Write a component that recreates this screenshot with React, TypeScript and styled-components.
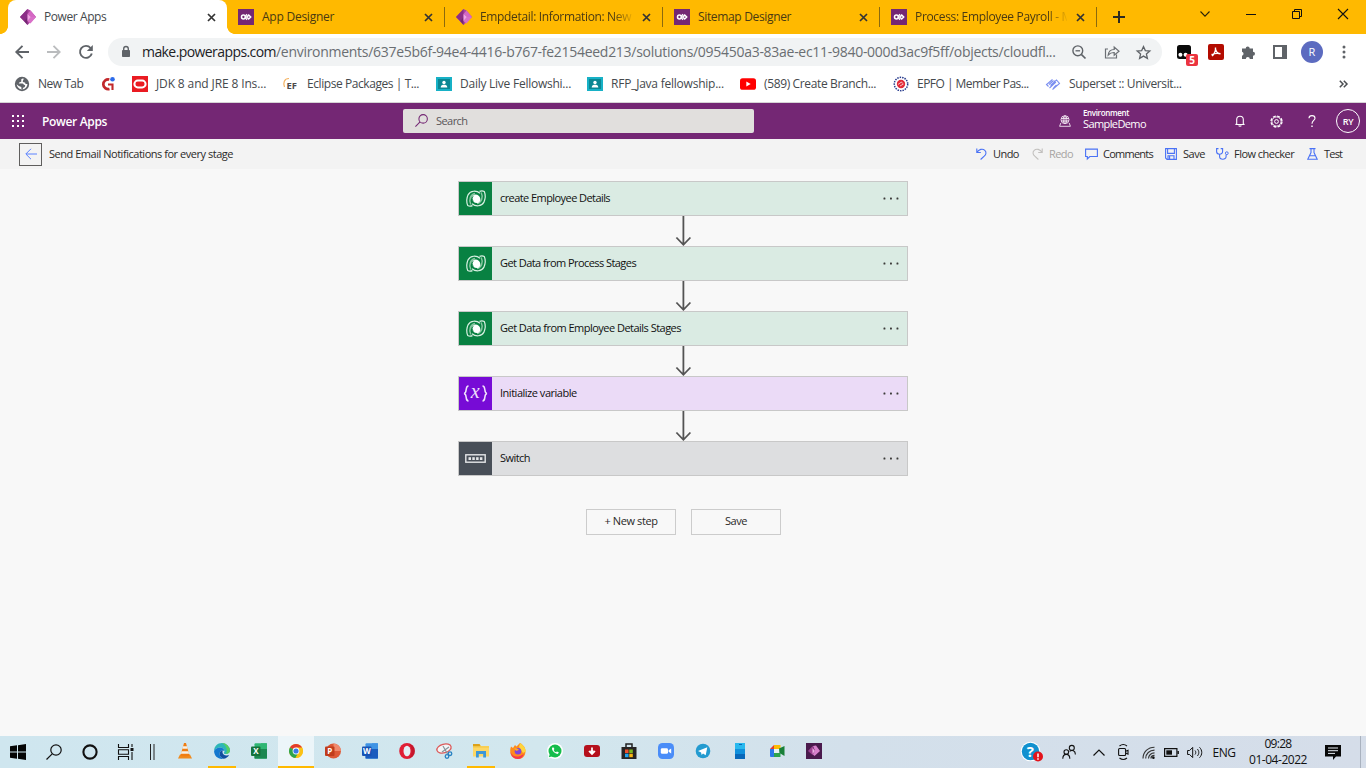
import React from 'react';
import styled, { createGlobalStyle } from 'styled-components';

const GlobalStyle = createGlobalStyle`
  * { box-sizing: border-box; }
  body { margin: 0; overflow: hidden; background: #f8f8f8; font-family: "Open Sans", "Noto Sans", sans-serif; }
  svg { display: block; flex: none; overflow: visible; }
`;

const Screen = styled.div`
  width: 1366px;
  height: 768px;
  display: flex;
  flex-direction: column;
`;

const Label = styled.span<{ $track?: number; $size?: number }>`
  font-size: ${p => p.$size ?? 12}px;
  letter-spacing: ${p => p.$track ?? 0}px;
  white-space: pre;
`;

/* ---------- browser tabs ---------- */

const TabStrip = styled.div`
  height: 34px;
  flex: none;
  display: flex;
  padding-left: 8px;
  background: #ffb900;
`;

const Tab = styled.div<{ $active?: boolean; $width: number }>`
  position: relative;
  width: ${p => p.$width}px;
  display: flex;
  align-items: center;
  padding: 0 11px;
  padding-left: ${p => (p.$active ? 12 : 11)}px;
  color: ${p => (p.$active ? '#45494d' : '#4a3a12')};
  background: ${p => (p.$active ? '#fff' : 'transparent')};
  border-radius: ${p => (p.$active ? '8px 8px 0 0' : '0')};
  &::before, &::after {
    content: '';
    display: ${p => (p.$active ? 'block' : 'none')};
    position: absolute;
    bottom: 0;
    width: 8px;
    height: 8px;
  }
  &::before { left: -8px; background: radial-gradient(circle at 0 0, transparent 7.6px, #fff 8.2px); }
  &::after { right: -8px; background: radial-gradient(circle at 100% 0, transparent 7.6px, #fff 8.2px); }
`;

const TabTitle = styled.div<{ $fade?: boolean }>`
  flex: 1;
  min-width: 0;
  margin: 0 9px 0 8px;
  overflow: hidden;
  line-height: 16px;
  display: flex;
  -webkit-mask-image: ${p => (p.$fade ? 'linear-gradient(90deg, #000 87%, transparent 101%)' : 'none')};
`;

const TabDivider = styled.i`
  width: 1px;
  height: 20px;
  margin-top: 7px;
  background: #8b6a0e;
`;

const NewTab = styled.div`
  width: 44px;
  display: grid;
  place-items: center;
`;

const WindowControls = styled.div`
  margin-left: auto;
  height: 28px;
  display: grid;
  grid-template-columns: repeat(4, 46px);
  place-items: center;
`;

/* ---------- address bar ---------- */

const AddressRow = styled.div`
  height: 36px;
  flex: none;
  display: flex;
  align-items: center;
  background: #fff;
`;

const NavButtons = styled.div`
  width: 108px;
  padding-left: 6px;
  display: grid;
  grid-template-columns: repeat(3, 32px);
  place-items: center;
`;

const Omnibox = styled.div`
  width: 1054px;
  height: 28px;
  border-radius: 14px;
  background: #f1f3f4;
  display: flex;
  align-items: center;
  padding-left: 12px;
  color: #6a6e72;
  line-height: 20px;
`;

const Url = styled.div`
  width: 931px;
  flex: none;
  padding: 0 0 2px 10px;
  display: flex;
  align-items: baseline;
  b { font-weight: 400; color: #202124; }
`;

const OmniActions = styled.div`
  display: grid;
  grid-template-columns: 32px 33px 31px;
  place-items: center;
`;

const Extensions = styled.div`
  display: grid;
  padding-left: 6px;
  grid-template-columns: 32px 32px 32px 32px 32px 32px;
  place-items: center;
`;

const ExtensionWithBadge = styled.div`
  position: relative;
`;

const Badge = styled.span`
  position: absolute;
  left: 9px;
  top: 9px;
  width: 12px;
  height: 12px;
  border-radius: 2px;
  background: #eb3440;
  color: #fff;
  font: 700 10px/12px "Open Sans", sans-serif;
  text-align: center;
`;

const Profile = styled.div`
  width: 22px;
  height: 22px;
  border-radius: 50%;
  background: #5c6bc0;
  color: #fff;
  font-size: 11px;
  line-height: 22px;
  text-align: center;
`;

/* ---------- bookmarks ---------- */

const BookmarkBar = styled.div`
  height: 33px;
  flex: none;
  display: flex;
  align-items: center;
  padding: 0 18px 4px 14px;
  background: #fff;
  border-bottom: 1px solid #d6d3d6;
`;

const Bookmark = styled.div<{ $width: number }>`
  width: ${p => p.$width}px;
  display: flex;
  align-items: center;
  gap: 8px;
  color: #45494d;
  line-height: 16px;
`;

const BookmarkMore = styled.div`
  margin-left: auto;
`;

/* ---------- app header ---------- */

const Header = styled.header`
  height: 36px;
  flex: none;
  display: flex;
  align-items: center;
  padding-left: 12px;
  color: #fff;
  background: #742774;
`;

const Brand = styled.div`
  width: 379px;
  flex: none;
  display: flex;
  padding: 1px 0 0 18px;
  font-weight: 600;
  line-height: 16px;
`;

const SearchBox = styled.div`
  width: 351px;
  flex: none;
  height: 24px;
  border-radius: 2px;
  background: #e1dfdd;
  color: #5a5659;
  display: flex;
  align-items: center;
  gap: 8px;
  padding: 0 0 1px 12px;
`;

const Environment = styled.div`
  margin-left: 305px;
  width: 163px;
  flex: none;
  display: flex;
  align-items: center;
  gap: 12px;
`;

const EnvironmentText = styled.div`
  display: flex;
  flex-direction: column;
  line-height: 12px;
  padding-bottom: 4px;
`;

const EnvironmentCaption = styled(Label)`
  font-weight: 600;
  line-height: 10px;
`;

const HeaderActions = styled.div`
  display: grid;
  grid-template-columns: repeat(4, 36px);
  place-items: center;
`;

const Avatar = styled.div`
  width: 24px;
  height: 24px;
  border: 1px solid #fff;
  border-radius: 50%;
  font-size: 9px;
  font-weight: 600;
  line-height: 24px;
  letter-spacing: -0.3px;
  text-align: center;
`;

/* ---------- command bar ---------- */

const CommandBar = styled.div`
  height: 30px;
  flex: none;
  display: flex;
  align-items: center;
  padding-left: 19px;
  background: #f3f3f3;
  color: #2b2a29;
`;

const BackButton = styled.div`
  width: 23px;
  height: 23px;
  border: 1px solid #5f5e5d;
  display: grid;
  place-items: center;
`;

const FlowName = styled.div`
  width: 934px;
  display: flex;
  padding-left: 7px;
  line-height: 16px;
`;

const Command = styled.div<{ $width: number; $gap: number; $disabled?: boolean }>`
  width: ${p => p.$width}px;
  display: flex;
  align-items: center;
  gap: ${p => p.$gap}px;
  line-height: 16px;
  color: ${p => (p.$disabled ? '#a6a4a2' : '#2b2a29')};
`;

/* ---------- flow canvas ---------- */

const Canvas = styled.main`
  flex: 1;
  display: flex;
  flex-direction: column;
  align-items: center;
  padding-top: 12px;
  background: #f8f8f8;
`;

const Card = styled.div<{ $tint: string }>`
  width: 450px;
  height: 35px;
  border: 1px solid #c8c8c8;
  background: ${p => p.$tint};
  display: flex;
  align-items: center;
`;

const CardIcon = styled.div<{ $color: string }>`
  width: 33px;
  height: 33px;
  background: ${p => p.$color};
  display: grid;
  place-items: center;
`;

const CardTitle = styled.div`
  flex: 1;
  display: flex;
  padding: 0 0 1px 8px;
  line-height: 16px;
  color: #111;
`;

const CardMenu = styled.div`
  padding-right: 8px;
`;

const Connector = styled.div`
  height: 30px;
`;

const ButtonRow = styled.div`
  display: flex;
  gap: 15px;
  padding: 33px 0 0 1px;
`;

const CanvasButton = styled.div`
  width: 90px;
  height: 26px;
  border: 1px solid #ccc;
  color: #2b2a29;
  line-height: 22px;
  display: flex;
  justify-content: center;
`;

/* ---------- taskbar ---------- */

const Taskbar = styled.footer`
  height: 32px;
  flex: none;
  display: flex;
  background: linear-gradient(90deg, #cfe6ef 0%, #d2e7ee 40%, #d3e0eb 62%, #d5dde9 100%);
  color: #111;
`;

const SystemButtons = styled.div`
  width: 167px;
  padding-bottom: 1px;
  display: grid;
  grid-template-columns: repeat(4, 36px) 16px;
  align-items: center;
  justify-items: center;
`;

const TaskApp = styled.div<{ $open?: boolean; $active?: boolean }>`
  width: 36px;
  margin-right: 1px;
  padding-bottom: 2px;
  display: grid;
  place-items: center;
  background:
    ${p => (p.$open ? 'linear-gradient(#ffb900, #ffb900) bottom / ' + (p.$active ? 36 : 28) + 'px 2px no-repeat,' : '')}
    ${p => (p.$active ? '#ecf5f9' : 'transparent')};
`;

const Tray = styled.div`
  margin-left: auto;
  width: 352px;
  display: grid;
  grid-template-columns: 36px 37px 23px 26px 24px 22px 26px 32px 76px 34px 16px;
  align-items: center;
  justify-items: center;
`;

const Clock = styled.div`
  display: flex;
  flex-direction: column;
  align-items: center;
  line-height: 16px;
`;

const ShowDesktop = styled.i`
  width: 1px;
  height: 32px;
  margin-left: 4px;
  background: #a9b2bf;
`;

/* ---------- icons ---------- */

type IconProps = { w?: number; h?: number; box?: string; children: React.ReactNode };
const Icon = ({ w = 16, h = w, box = `0 0 ${w} ${h}`, children }: IconProps) => (
  <svg width={w} height={h} viewBox={box} fill="none">{children}</svg>
);

const PowerAppsIcon = () => (
  <Icon>
    <path d="M7.500 0L0 8l7.500 8L16 8 10.500 1.500z" fill="#a9459f" />
    <path d="M7.500 0v8L4 12 0 8z" fill="#8b2e86" />
    <path d="M4 12l3.500-4v8z" fill="#742774" />
    <path d="M10.500 1.500L16 8l-5 0-3.500-3z" fill="#d568c4" />
    <path d="M11 8h5l-5.500 6.500L7.500 12z" fill="#d970c8" />
    <path d="M7.500 5L11 8l-3.500 4z" fill="#f0a5e4" />
  </Icon>
);

const DynamicsIcon = () => (
  <Icon>
    <path d="M0 0h16v16H0z" fill="#742774" />
    <circle cx="5.400" cy="8" r="1.900" stroke="#fff" strokeWidth="1.500" />
    <path d="M10.700 6l2 2-2 2-2-2z" stroke="#fff" strokeWidth="1.500" />
    <path d="M7.500 7l1.500-1.700M7.500 9l1.500 1.700" stroke="#fff" strokeWidth="1.300" />
  </Icon>
);

const CloseIcon = ({ color = '#333' }: { color?: string }) => (
  <Icon w={9}><path d="M1 1l7 7M8 1L1 8" stroke={color} strokeWidth="1.700" /></Icon>
);

const GlobeIcon = () => (
  <Icon>
    <circle cx="8" cy="8" r="7.200" fill="#5f6368" />
    <path d="M9.500 2.600c-2-.2-2.500 1-2.300 2 .8.600-.2 1.600-1.500 1.600-.8.300-.5 1.300-1.500 1.400h4.300c1 .3 1 1.400 2.200 1.500.9.200.3 1.600-.3 2.200-.9.300-1.700.6-1.700 2.200-1.700-.2-1.400-1.600-1.300-2.600C5.500 10.800 4 9.700 2.700 8.300 3 11 5.300 13.300 8 13.400c3 0 5.400-2.400 5.400-5.400-1.200.4-2.400-.3-2.300-1.500-.8-.2-2-.1-2.400-1 .2-.8.300-1.200.8-1.700z" fill="#fff" />
  </Icon>
);

const CIcon = () => (
  <Icon>
    <path d="M8.300 3.500A4.900 4.900 0 1 0 8.500 13" stroke="#c2282b" strokeWidth="2.700" />
    <path d="M7 8.500h4.500V14" stroke="#c2282b" strokeWidth="2.100" />
    <circle cx="11.500" cy="3.300" r="2.300" fill="#2c6bea" />
  </Icon>
);

const OracleIcon = () => (
  <Icon>
    <path d="M0 0h16v16H0z" fill="#ea1b22" />
    <rect x="2.400" y="4.600" width="11.200" height="6.800" rx="3.400" stroke="#fff" strokeWidth="2" />
  </Icon>
);

const EclipseIcon = () => (
  <Icon>
    <path d="M6 2.500C1 2.500 0 7 1.500 11" stroke="#f4b15e" strokeWidth="1.200" />
    <text x="3.500" y="13" fontSize="9.500" fontWeight="700" fill="#4d4a4a" fontFamily="Open Sans, sans-serif">EF</text>
  </Icon>
);

const ClassroomIcon = () => (
  <Icon>
    <path d="M0 1h16v14H0z" fill="#17b1c6" />
    <path d="M2 3h12v10H2z" fill="#0b8793" />
    <circle cx="8" cy="6.500" r="1.700" fill="#fff" />
    <path d="M4.700 11.500c0-2.400 1.700-2.800 3.300-2.800s3.300.4 3.300 2.800z" fill="#fff" />
  </Icon>
);

const YoutubeIcon = () => (
  <Icon>
    <rect y="2.300" width="16" height="11.500" rx="2.600" fill="#f00" />
    <path d="M6.300 5.600v5L10.700 8z" fill="#fff" />
  </Icon>
);

const EpfoIcon = () => (
  <Icon>
    <circle cx="8" cy="8" r="6.700" stroke="#263a8c" strokeWidth="1.500" strokeDasharray="1.500 1" />
    <circle cx="8" cy="8" r="4.200" fill="#e22a38" />
    <path d="M5 8.500l3.500-2.500 1 1.500M7 10l3.500-2" stroke="#f6c3c7" />
  </Icon>
);

const SupersetIcon = () => (
  <Icon>
    <path d="M3.500 10.500L1.500 8.500 7.500 3.500M4.500 12L10.500 6.500 8.500 4.500M5.500 9.500l6-5.500 3 3.500-7 6M8.500 12l3-3M4 8.500l4-3.500" stroke="#7a8ef0" strokeWidth="1.100" />
  </Icon>
);

const NavBack = ({ color }: { color: string }) => (
  <Icon w={14}><path d="M14 7H1.500M7.500.8L1.300 7l6.200 6.200" stroke={color} strokeWidth="1.900" /></Icon>
);
const NavForward = ({ color }: { color: string }) => (
  <Icon w={14}><path d="M0 7h12.500M6.500.8L12.700 7l-6.200 6.200" stroke={color} strokeWidth="1.800" /></Icon>
);
const Reload = () => (
  <Icon w={14}>
    <path d="M12.800 8.500A6 6 0 1 1 11.600 3" stroke="#5f6368" strokeWidth="1.900" />
    <path d="M13.800 0v6H7.800z" fill="#5f6368" />
  </Icon>
);
const Lock = () => (
  <Icon w={12} h={14}>
    <rect x="2" y="5" width="8" height="7" rx=".8" fill="#5f6368" />
    <path d="M3.700 5.500V3.800a2.300 2.300 0 0 1 4.600 0v1.700" stroke="#5f6368" strokeWidth="1.400" />
  </Icon>
);
const ZoomOut = () => (
  <Icon w={14}>
    <circle cx="5.800" cy="5.800" r="4.900" stroke="#5f6368" strokeWidth="1.400" />
    <path d="M9.300 9.300L13.500 13.500" stroke="#5f6368" strokeWidth="1.700" /><path d="M3.500 5.800h4.600" stroke="#5f6368" strokeWidth="1.300" />
  </Icon>
);
const Share = () => (
  <Icon>
    <path d="M4 5H1.500v9h11v-3.500" stroke="#6b6f74" strokeWidth="1.200" />
    <path d="M4.200 11c.4-4 2.600-5.500 6-5.500V3l4.800 4.200-4.800 4V8.500c-3-.1-4.500.8-6 2.500z" stroke="#6b6f74" strokeWidth="1.200" />
  </Icon>
);
const Star = () => (
  <Icon w={15}><path d="M7.500 1.500l1.800 4.100 4.500.4-3.400 3 1 4.400-3.900-2.300-3.900 2.300 1-4.400L1.200 6l4.500-.4z" stroke="#5f6368" strokeWidth="1.300" /></Icon>
);
const MonkeyIcon = () => (
  <Icon w={14}>
    <rect width="14" height="14" rx="2.500" fill="#0a0a0a" />
    <circle cx="3.400" cy="9.700" r="2" fill="#fff" />
    <circle cx="8.600" cy="9.700" r="2" fill="#fff" />
  </Icon>
);
const AcrobatIcon = () => (
  <Icon>
    <rect width="16" height="16" rx="2" fill="#b30b00" />
    <path d="M7.500 3.500c.3 3-.8 6-3.500 8.500M7.800 5.500c.3 2.200 2 4 4.700 4.300M3.500 10.700c2.800-1.300 6-1.700 9-.9" stroke="#fff" strokeWidth="1.400" />
  </Icon>
);
const Puzzle = () => (
  <Icon w={15}>
    <path d="M1 3.500h3.700a2 2 0 1 1 4 0H12v3.300a2 2 0 1 1 0 4V14H8.800a2 2 0 0 0-4 0H1v-3.300a2 2 0 0 0 0-3.900z" fill="#5f6368" />
  </Icon>
);
const SidePanel = () => (
  <Icon w={14}><path d="M1 1h12v12H1z" stroke="#5f6368" strokeWidth="2" /><path d="M9 1h4v12H9z" fill="#5f6368" /></Icon>
);
const VerticalDots = () => (
  <Icon w={4} h={14}><g fill="#5f6368"><circle cx="2" cy="2" r="1.500" /><circle cx="2" cy="7" r="1.500" /><circle cx="2" cy="12" r="1.500" /></g></Icon>
);

const Waffle = () => (
  <Icon w={12}>
    {[0, 5, 10].map(y => [0, 5, 10].map(x => <rect key={`${x}-${y}`} x={x} y={y} width="2" height="2" fill="#fff" />))}
  </Icon>
);
const SearchIcon = ({ size, color, weight = 1.1 }: { size: number; color: string; weight?: number }) => (
  <Icon w={size} box="0 0 16 16">
    <circle cx="10" cy="6" r="5.200" stroke={color} strokeWidth={weight} />
    <path d="M6.200 9.800L.5 15.500" stroke={color} strokeWidth={weight} />
  </Icon>
);
const EnvironmentIcon = () => (
  <Icon w={12}>
    <g stroke="#f0e3f0" strokeWidth=".9">
      <circle cx="6" cy="4.700" r="4" /><ellipse cx="6" cy="4.700" rx="1.800" ry="4" /><path d="M2 3.500h8M2 6h8M6 .7v8M1.800 8L.6 11.300h10.800L10.200 8" />
    </g>
  </Icon>
);
const Bell = () => (
  <Icon w={10} h={12}><path d="M1.700 9V4.500a3.300 3.300 0 0 1 6.600 0V9l1.200.5H.5zM3.700 10.500c.3 1 2.300 1 2.600 0" stroke="#fff" strokeWidth="1.100" /></Icon>
);
const Gear = () => (
  <Icon w={13}>
    <circle cx="6.500" cy="6.500" r="5.500" stroke="#fff" strokeWidth="1.300" strokeDasharray="2.900 1.420" />
    <circle cx="6.500" cy="6.500" r="4.600" stroke="#fff" strokeWidth=".9" />
    <circle cx="6.500" cy="6.500" r="1.900" stroke="#fff" strokeWidth="1" />
  </Icon>
);
const Question = () => (
  <Icon w={8} h={12}>
    <path d="M1 3.200C1 1.500 2.200.6 4 .6s3 1 3 2.600C7 5.500 4 5.500 4 8.800" stroke="#fff" strokeWidth="1.100" />
    <path d="M3.300 10.500h1.400V12H3.300z" fill="#fff" />
  </Icon>
);

const BLUE = '#4a72f5';
const BackArrow = () => (
  <Icon w={12}><path d="M12 6H1M6 .8L.8 6 6 11.200" stroke="#5b82ff" strokeWidth="1" /></Icon>
);
const Undo = ({ color = BLUE }: { color?: string }) => (
  <Icon w={11} h={12}><path d="M.8.5v4h4M.8 4.500C3 1.200 6.500.2 8.800 2.300c2.300 2.300.8 4.500-.6 5.900L4.600 11.500" stroke={color} strokeWidth="1.100" /></Icon>
);
const Redo = () => (
  <Icon w={11} h={12}><path d="M10.200.5v4h-4M10.200 4.500C8 1.200 4.500.2 2.200 2.300-.1 4.600 1.400 6.800 2.800 8.200l3.600 3.300" stroke="#c2c0be" strokeWidth="1.100" /></Icon>
);
const Comment = () => (
  <Icon w={13} h={12}><path d="M.6 1.100h11.800v7.400H4.800L2.300 11V8.500H.6z" stroke={BLUE} strokeWidth="1.100" /></Icon>
);
const SaveIcon = () => (
  <Icon w={12}><path d="M.6.600h10.800v10.800H2L.6 10zM2.600.600v4.800h6.800V.600M3 11.300V7.800h6v3.500M4.600 8v3" stroke={BLUE} strokeWidth="1.100" /></Icon>
);
const Stethoscope = () => (
  <Icon w={13} h={12}>
    <path d="M2.500.6H.6v2.900c0 3.600 6 3.600 6 0V.6H4.700M3.600 6.200v2.300c0 3.600 6.500 3.600 6.500 0V6.700" stroke={BLUE} strokeWidth="1.100" />
    <circle cx="10.800" cy="5.200" r="1.400" stroke={BLUE} />
  </Icon>
);
const Flask = () => (
  <Icon w={11} h={12}><path d="M2.500.600h6M4 .6v4L.8 11.300h9.400L7 4.600v-4M2.500 7.700h6" stroke={BLUE} strokeWidth="1.100" /></Icon>
);

const DataverseIcon = () => (
  <Icon w={20} h={17}>
    {[0, 180].map(turn => (
      <g key={turn} transform={`rotate(${turn} 10 8.500)`}>
        <path d="M14 3.300C10.500.3 4.500.4 2.200 4.600.6 8 .5 12.500 1.700 15.400c1.400.9 3.200.8 4.800.2" stroke="#d9f0e2" strokeWidth="1.200" />
        <path d="M4.800 14.500C2.500 10 4.500 4.300 9 3.600" stroke="#86c7a0" strokeWidth="1.500" />
      </g>
    ))}
    <path d="M7 5.300c3-2 7 .2 7.300 3.500.1 2.100-.6 3.400-1.900 4-3.500.9-6.300-1.500-6.600-4.400-.1-1.400.3-2.500 1.200-3.100z" fill="#fff" />
    <path d="M7.300 11.500C5.800 9.500 5.900 7 7.600 5.700" stroke="#088142" strokeWidth=".9" />
  </Icon>
);
const VariableIcon = () => (
  <Icon w={25} h={20}>
    <path d="M5.500 2C1.500 2 4.800 9 1 9.500 4.800 10 1.500 17 5.500 17M19.500 2c4 0 .7 7 4.500 7.500-3.800.5-.5 7.500-4.500 7.500" stroke="#f0e2fc" strokeWidth="1.500" />
    <text x="12.300" y="14" textAnchor="middle" fontFamily="Liberation Serif, serif" fontStyle="italic" fontSize="20" fill="#f0e2fc">x</text>
  </Icon>
);
const SwitchIcon = () => (
  <Icon w={21} h={9}>
    <rect x=".8" y=".8" width="19.400" height="7.400" stroke="#e4e6e8" strokeWidth="1.400" />
    {[3.5, 7.3, 11.1, 14.9].map(x => <rect key={x} x={x} y="3.200" width="2.500" height="2.800" fill="#e4e6e8" />)}
  </Icon>
);
const Ellipsis = () => (
  <Icon w={16} h={3}>{[0.5, 7, 13.5].map(x => <rect key={x} x={x} y=".5" width="1.900" height="1.900" rx=".5" fill="#3b3a39" />)}</Icon>
);
const ArrowDown = () => (
  <Icon w={16} h={30}><path d="M8.400 0v29M1.400 21.500l7 7.300 7-7.300" stroke="#545454" strokeWidth="1.800" /></Icon>
);

/* taskbar drawings */
const WindowsLogo = () => <Icon><path d="M0 2.300l7-1v6.200H0zM8 1.200L16 0v7.500H8zM0 8.500h7v6.200l-7-1zM8 8.500h8V16l-8-1.200z" fill="#050505" /></Icon>;
const Cortana = () => <Icon><circle cx="8" cy="8" r="6.600" stroke="#111" strokeWidth="2.100" /></Icon>;
const TaskView = () => (
  <Icon><path d="M.5 0v3.500h10V0M.5 16v-3.500h10V16M.5 5.700h10v4.600H.5zM14 0v3M14 8v8" stroke="#111" strokeWidth="1.100" /><path d="M12.500 4h3v3h-3z" fill="#111" /></Icon>
);
const Bars = () => <Icon w={5} h={16}><path d="M.5 0v16M4 0v16" stroke="#222" /></Icon>;
const Vlc = () => (
  <Icon>
    <path d="M3 11.500h10l2 4H1z" fill="#f08a1c" />
    <path d="M7 0h2l3.500 12.500c-2 1.200-7 1.200-9 0z" fill="#ef7d12" />
    <path d="M6 3.300h4l.7 2.500H5.300zM4.600 8.200h6.800l.7 2.500H3.900z" fill="#f7efe4" />
  </Icon>
);
const Edge = () => (
  <Icon>
    <path d="M8 0a8 8 0 0 1 8 7.500c0 2-1.800 3.500-4.200 3.500-1.200 0-2-.4-2-1 0-.5.7-.7.7-1.900C10.500 6 8.500 4.500 6 4.500 3.500 4.500 1 6 .1 8 0 3.500 3.500 0 8 0z" fill="#2db6b8" />
    <path d="M8 0a8 8 0 0 1 8 7.500c0 2-1.800 3.500-4.200 3.500C14 8 13 3 8 0z" fill="#56cf63" />
    <path d="M.1 8C1 6 3.500 4.500 6 4.500c2.500 0 4.500 1.500 4.500 3.600C8 6.500 5 8.500 5.600 11.500 6 13.500 7.500 15 9.500 15.800 4.500 16.800 0 13 .1 8z" fill="#1478cf" />
    <path d="M5.600 11.500C5.200 9 7 7.200 9 7.500c-1 1-.8 4.500 3.500 5 1 .1 2-.3 2.600-.5-1.100 2-3.200 3.600-5.600 3.800C7.500 15 6 13.500 5.600 11.500z" fill="#124f9f" />
  </Icon>
);
const Office = ({ letter, a, b, c, round }: { letter: string; a: string; b: string; c: string; round?: boolean }) => (
  <Icon>
    {round ? <><circle cx="8.500" cy="8" r="7.500" fill={a} /><path d="M8.500.5A7.500 7.500 0 0 1 16 8H8.500z" fill="#f08a6d" /></> : <><rect x="3.500" y=".3" width="12.500" height="15.400" rx="1" fill={a} /><path d="M3.500 6h12.500v9.500H3.500z" fill={b} /><path d="M10 .3h6V5h-6z" fill={a} /></>}
    <rect x="0" y="3.500" width="9.500" height="9.500" rx="1" fill={c} />
    <text x="4.800" y="11.200" textAnchor="middle" fontFamily="Open Sans, sans-serif" fontWeight="700" fontSize="8" fill="#fff">{letter}</text>
  </Icon>
);
const Chrome = () => (
  <Icon w={14}>
    <circle cx="7" cy="7" r="7" fill="#fbc116" />
    <path d="M7 7L.94 3.500A7 7 0 0 1 13.060 3.500z" fill="#e33b2e" />
    <path d="M.94 3.500A7 7 0 0 0 6.500 14L9.500 8z" fill="#2da44e" />
    <path d="M7 3.600h6.100a7 7 0 0 1-6.500 10.400L9.900 8.700z" fill="#fbc116" />
    <circle cx="7" cy="7" r="3.400" fill="#fff" /><circle cx="7" cy="7" r="2.600" fill="#3a7be8" />
  </Icon>
);
const Opera = () => <Icon><ellipse cx="8" cy="8" rx="7.800" ry="8" fill="#e01e35" /><path d="M10 1.200c3.500 2.500 3.500 11 0 13.600C18 14 18 2 10 1.200z" fill="#a70e1e" opacity=".45" /><ellipse cx="8" cy="8" rx="3.500" ry="5.200" fill="#e3eff5" /></Icon>;
const Snip = () => (
  <Icon>
    <ellipse cx="8" cy="5.500" rx="7.300" ry="4.300" transform="rotate(-15 8 5.500)" fill="#f3f5f6" stroke="#dc5a5a" strokeWidth="1.300" />
    <path d="M7 3l4.500 8M13 4L6 9" stroke="#87939b" strokeWidth="1.200" />
    <circle cx="14" cy="10.700" r="1.800" stroke="#2680c2" strokeWidth="1.300" /><circle cx="11" cy="13.500" r="1.800" stroke="#2680c2" strokeWidth="1.300" />
  </Icon>
);
const Explorer = () => (
  <Icon>
    <path d="M0 1h6.500l1.500 2H16v10H0z" fill="#f8cf55" /><path d="M0 1h6.500l1 2.300H0z" fill="#dca21b" /><path d="M0 5h16v8.500H0z" fill="#fdd765" />
    <path d="M3 8h10v6.500h-2.800V11H5.800v3.500H3z" fill="#3c97d8" />
  </Icon>
);
const Firefox = () => (
  <Icon>
    <path d="M1 3.500L3 5l2-3 1.500 1.500L10 0c2 1 3 2.500 4 3.500 3 4.500 1.600 12.500-6 12.500C.5 16-1 9 1 3.500z" fill="#ff8a1c" />
    <path d="M10 0c2.500 1.500 6 5 5.800 8.500L13 10 9 4z" fill="#ffd53d" /><path d="M.5 9C2 13 6 14.500 10 13l4-2c-1 3-3.500 5-6.300 5C4 16 1 13 .5 9z" fill="#f5364f" />
    <circle cx="8" cy="8.300" r="3.300" fill="#8045d8" /><path d="M4 5.500c2-.5 4 0 5 1.500-1.300.2-2 .8-3 .8z" fill="#ffad22" />
  </Icon>
);
const Whatsapp = () => (
  <Icon>
    <circle cx="8" cy="8" r="8" fill="#fff" /><path d="M.8 15.400L2 11l3.500 3.500z" fill="#fff" /><circle cx="8" cy="8" r="6.500" fill="#14bd4b" /><path d="M1.800 14.300l1.200-4 2.700 3z" fill="#14bd4b" />
    <path d="M5.400 4.600c-1.800 1.800 2.600 7 5.600 6.200l.8-1.500-1.900-.9-.8.8C8 9 7 8 6.700 7l.7-.9-.8-1.700z" fill="#fff" />
  </Icon>
);
const Download = () => <Icon><rect y="2" width="16" height="12" rx="3" fill="#b5101c" /><path d="M8 4.500v6M5 8l3 3 3-3M6.500 8H9.500" stroke="#fff" strokeWidth="1.700" /></Icon>;
const Store = () => (
  <Icon><path d="M5 4V1h6v3" stroke="#202020" strokeWidth="1.500" /><path d="M.5 4h15v12H.5z" fill="#262424" /><path d="M4 6.500h3.500V10H4z" fill="#f0502a" /><path d="M8.300 6.500h3.500V10H8.300z" fill="#7fba20" /><path d="M4 10.700h3.500v3.500H4z" fill="#20a3ea" /><path d="M8.300 10.700h3.500v3.500H8.300z" fill="#fcb813" /></Icon>
);
const ZoomApp = () => <Icon><rect width="16" height="16" rx="4.500" fill="#4a8df8" /><rect x="2.800" y="5.200" width="7.200" height="5.600" rx="1.400" fill="#fff" /><path d="M10.600 7.300l2.600-1.800v5l-2.600-1.800z" fill="#fff" /></Icon>;
const Telegram = () => <Icon><circle cx="8" cy="8" r="7.300" fill="#239bd0" /><path d="M3 8l9.300-3.700-1.600 8L8 10.500 6.600 12l-.5-2.600z" fill="#fff" /></Icon>;
const Phone = () => <Icon w={10} h={16}><path d="M0 0h10v16H0z" fill="#28b8ee" /><path d="M0 6h10v5H0z" fill="#1090dc" /><path d="M0 11h10v5H0z" fill="#0868ba" /><path d="M4 1.500h3" stroke="#0868ba" /></Icon>;
const Meet = () => (
  <Icon><path d="M1 6l4-4v4z" fill="#e33b2e" /><path d="M5 2h6.500v4H5z" fill="#fbbc04" /><path d="M1 6h4v8H2a1 1 0 0 1-1-1z" fill="#2b79e8" /><path d="M5 10h6.500v4H5z" fill="#2da44e" /><path d="M5 6h5v4H5z" fill="#e8f1f4" /><path d="M10 5.500L15.500 3v10l-5-3z" fill="#188038" /></Icon>
);
const PowerAppsTile = () => <Icon><path d="M0 0h16v16H0z" fill="#4a1a4d" /><path d="M7 3l3-.5 4 5.500-5.500 5L6.500 11 9 8z" fill="#d880cc" /><path d="M2 8l4.500-5L9 8l-2.500 4z" fill="#9c4090" /><path d="M6.500 5L9 8l-2.500 3z" fill="#eeb0e4" /></Icon>;

const HelpAlert = () => (
  <Icon w={22} h={20}>
    <circle cx="9.500" cy="9.500" r="9.800" fill="#fff" /><circle cx="9.500" cy="9.500" r="8.700" fill="#1191cf" />
    <text x="9.300" y="15" textAnchor="middle" fontFamily="Open Sans, sans-serif" fontWeight="700" fontSize="15" fill="#fff">?</text>
    <circle cx="17" cy="14.500" r="5" fill="#e3131b" /><path d="M17 11.500v3.700M17 16.300v1.500" stroke="#fff" strokeWidth="1.500" />
  </Icon>
);
const People = () => (
  <Icon w={14} h={14}><g stroke="#111" strokeWidth="1.100"><circle cx="4.300" cy="7" r="2.300" /><path d="M.8 13.800c0-5.900 7-5.900 7 0" /><circle cx="9.800" cy="2.900" r="2.500" /><path d="M7.600 6.400c2.600-2 5.800-.5 5.800 3" /></g></Icon>
);
const Chevron = () => <Icon w={12} h={7}><path d="M.5 6.500L6 1l5.500 5.500" stroke="#111" strokeWidth="1.200" /></Icon>;
const MeetNow = () => (
  <Icon w={11} h={16}><g stroke="#111" strokeWidth="1.100"><path d="M1.500 2C4 0 6.500 0 9 2M1.500 14c2.500 2 5 2 7.500 0" /><rect x=".6" y="4.500" width="7" height="7" rx="1" /><path d="M7.600 7.200l2.400-1v4L7.600 9" /></g></Icon>
);
const Wifi = () => (
  <Icon w={13}><g stroke="#333"><path d="M1 12.500C1 6 6 1.200 12.500 1.200M3.700 12.500c0-4.800 3.800-8.400 8.800-8.400M6.500 12.500c0-3.200 2.700-5.600 6-5.600" strokeWidth="1.100" /><path d="M9 12.500c0-2 1.600-3 3.500-3" strokeWidth="1.300" /></g><circle cx="11.400" cy="11.700" r="1.300" fill="#111" /></Icon>
);
const Battery = () => <Icon w={15} h={9}><path d="M.6.6h12.300v7.800H.6zM14.300 3v3" stroke="#111" strokeWidth="1.200" /><path d="M2.300 2.300H8v4.400H2.300z" fill="#111" /></Icon>;
const Speaker = () => (
  <Icon w={16} h={13}><g stroke="#111" strokeWidth="1"><path d="M.6 4.500h2L5.700 1.400v10.200L2.600 8.500h-2zM8 4.500c1 1 1 3 0 4M10.300 3c2 2 2 5 0 7M12.500 1.300c3 3 3 7.400 0 10.400" /></g></Icon>
);
const Notification = () => <Icon w={16}><path d="M0 1h16v11.500H11L8 16v-3.500H0z" fill="#080808" /><path d="M3 4h10M3 6.700h10M3 9.400h7" stroke="#e5ebf2" strokeWidth="1" /></Icon>;

/* ---------- data ---------- */

const tabs = [
  { title: 'Power Apps', track: -0.42, icon: <PowerAppsIcon />, width: 219, active: true },
  { title: 'App Designer', track: -0.24, icon: <DynamicsIcon />, width: 217 },
  { title: 'Empdetail: Information: New', track: -0.34, icon: <PowerAppsIcon />, width: 217, fade: true },
  { title: 'Sitemap Designer', track: -0.34, icon: <DynamicsIcon />, width: 216 },
  { title: 'Process: Employee Payroll - M', track: -0.33, icon: <DynamicsIcon />, width: 216, fade: true },
];

const bookmarks = [
  { title: 'New Tab', track: -0.5, icon: <GlobeIcon />, width: 87 },
  { title: '', track: 0, icon: <CIcon />, width: 31 },
  { title: 'JDK 8 and JRE 8 Ins...', track: -0.13, icon: <OracleIcon />, width: 151 },
  { title: 'Eclipse Packages | T...', track: -0.43, icon: <EclipseIcon />, width: 153 },
  { title: 'Daily Live Fellowshi...', track: -0.25, icon: <ClassroomIcon />, width: 151 },
  { title: 'RFP_Java fellowship...', track: -0.23, icon: <ClassroomIcon />, width: 153 },
  { title: '(589) Create Branch...', track: -0.36, icon: <YoutubeIcon />, width: 153 },
  { title: 'EPFO | Member Pas...', track: -0.52, icon: <EpfoIcon />, width: 152 },
  { title: 'Superset :: Universit...', track: -0.37, icon: <SupersetIcon />, width: 152 },
];

const commands = [
  { title: 'Undo', track: -0.55, icon: <Undo />, width: 56, gap: 6 },
  { title: 'Redo', track: -0.55, icon: <Redo />, width: 53, gap: 6, disabled: true },
  { title: 'Comments', track: -0.75, icon: <Comment />, width: 80, gap: 5 },
  { title: 'Save', track: -0.45, icon: <SaveIcon />, width: 51, gap: 6 },
  { title: 'Flow checker', track: -0.52, icon: <Stethoscope />, width: 91, gap: 5 },
  { title: 'Test', track: -0.8, icon: <Flask />, width: 50, gap: 6 },
];

const GREEN = { color: '#088142', tint: '#daebe3', icon: <DataverseIcon /> };
const steps = [
  { title: 'create Employee Details', track: -0.57, ...GREEN },
  { title: 'Get Data from Process Stages', track: -0.56, ...GREEN },
  { title: 'Get Data from Employee Details Stages', track: -0.52, ...GREEN },
  { title: 'Initialize variable', track: -0.48, color: '#770bd6', tint: '#ebdbf7', icon: <VariableIcon /> },
  { title: 'Switch', track: -0.54, color: '#484f58', tint: '#dddee0', icon: <SwitchIcon /> },
];

const taskApps: { icon: React.ReactNode; open?: boolean; active?: boolean }[] = [
  { icon: <Vlc /> },
  { icon: <Edge />, open: true },
  { icon: <Office letter="X" a="#2fb673" b="#1c8650" c="#14733c" /> },
  { icon: <Chrome />, open: true, active: true },
  { icon: <Office letter="P" a="#dd5835" b="#dd5835" c="#c13c1b" round /> },
  { icon: <Office letter="W" a="#3f93e4" b="#1b5cbe" c="#1753b5" /> },
  { icon: <Opera /> },
  { icon: <Snip /> },
  { icon: <Explorer />, open: true },
  { icon: <Firefox /> },
  { icon: <Whatsapp /> },
  { icon: <Download /> },
  { icon: <Store /> },
  { icon: <ZoomApp /> },
  { icon: <Telegram /> },
  { icon: <Phone /> },
  { icon: <Meet /> },
  { icon: <PowerAppsTile /> },
];

export default function App() {
  return (
    <Screen>
      <GlobalStyle />
      <TabStrip>
        {tabs.map((t, i) => (
          <React.Fragment key={t.title}>
            <Tab $active={t.active} $width={t.width}>
              {t.icon}
              <TabTitle $fade={t.fade}><Label $track={t.track}>{t.title}</Label></TabTitle>
              <CloseIcon />
            </Tab>
            {i > 0 && <TabDivider />}
          </React.Fragment>
        ))}
        <NewTab><Icon w={12}><path d="M6 0v12M0 6h12" stroke="#2d2a22" strokeWidth="2" /></Icon></NewTab>
        <WindowControls>
          <Icon w={10} h={6}><path d="M.5.5L5 5.200 9.500.5" stroke="#2a2209" strokeWidth="1.100" /></Icon>
          <Icon w={10} h={1}><path d="M0 .5h10" stroke="#111" /></Icon>
          <Icon w={10}><path d="M.5 2.500h7v7h-7zM2.500 2.500v-2h7v7h-2" stroke="#111" /></Icon>
          <Icon w={10}><path d="M0 0l10 10M10 0L0 10" stroke="#111" strokeWidth="1.100" /></Icon>
        </WindowControls>
      </TabStrip>

      <AddressRow>
        <NavButtons>
          <NavBack color="#5f6368" />
          <NavForward color="#babcbe" />
          <Reload />
        </NavButtons>
        <Omnibox>
          <Lock />
          <Url>
            <b><Label $size={14} $track={-0.58}>make.powerapps.com</Label></b>
            <Label $size={14} $track={-0.285}>/environments/637e5b6f-94e4-4416-b767-fe2154eed213/solutions/095450a3-83ae-ec11-9840-000d3ac9f5ff/objects/cloudfl...</Label>
          </Url>
          <OmniActions><ZoomOut /><Share /><Star /></OmniActions>
        </Omnibox>
        <Extensions>
          <ExtensionWithBadge><MonkeyIcon /><Badge>5</Badge></ExtensionWithBadge>
          <AcrobatIcon />
          <Puzzle />
          <SidePanel />
          <Profile>R</Profile>
          <VerticalDots />
        </Extensions>
      </AddressRow>

      <BookmarkBar>
        {bookmarks.map((b, i) => (
          <Bookmark key={i} $width={b.width}>{b.icon}{b.title && <Label $track={b.track}>{b.title}</Label>}</Bookmark>
        ))}
        <BookmarkMore><Icon w={9} h={8}><path d="M.8.8L4 4 .8 7.200M4.800.8L8 4 4.800 7.200" stroke="#4b4e52" strokeWidth="1.500" /></Icon></BookmarkMore>
      </BookmarkBar>

      <Header>
        <Waffle />
        <Brand><Label $track={-0.34}>Power Apps</Label></Brand>
        <SearchBox>
          <SearchIcon size={13} color="#742774" weight={1.3} />
          <Label $size={11} $track={-0.55}>Search</Label>
        </SearchBox>
        <Environment>
          <EnvironmentIcon />
          <EnvironmentText>
            <EnvironmentCaption $size={8} $track={-0.36}>Environment</EnvironmentCaption>
            <Label $size={11} $track={-0.6}>SampleDemo</Label>
          </EnvironmentText>
        </Environment>
        <HeaderActions>
          <Bell />
          <Gear />
          <Question />
          <Avatar>RY</Avatar>
        </HeaderActions>
      </Header>

      <CommandBar>
        <BackButton><BackArrow /></BackButton>
        <FlowName><Label $size={11} $track={-0.47}>Send Email Notifications for every stage</Label></FlowName>
        {commands.map(c => (
          <Command key={c.title} $width={c.width} $gap={c.gap} $disabled={c.disabled}>
            {c.icon}<Label $size={11} $track={c.track}>{c.title}</Label>
          </Command>
        ))}
      </CommandBar>

      <Canvas>
        {steps.map((s, i) => (
          <React.Fragment key={s.title}>
            {i > 0 && <Connector><ArrowDown /></Connector>}
            <Card $tint={s.tint}>
              <CardIcon $color={s.color}>{s.icon}</CardIcon>
              <CardTitle><Label $size={11} $track={s.track}>{s.title}</Label></CardTitle>
              <CardMenu><Ellipsis /></CardMenu>
            </Card>
          </React.Fragment>
        ))}
        <ButtonRow>
          <CanvasButton><Label $size={11} $track={-0.4}>+ New step</Label></CanvasButton>
          <CanvasButton><Label $size={11} $track={-0.45}>Save</Label></CanvasButton>
        </ButtonRow>
      </Canvas>

      <Taskbar>
        <SystemButtons>
          <WindowsLogo />
          <SearchIcon size={16} color="#111" weight={1.2} />
          <Cortana />
          <TaskView />
          <Bars />
        </SystemButtons>
        {taskApps.map((a, i) => <TaskApp key={i} $open={a.open} $active={a.active}>{a.icon}</TaskApp>)}
        <Tray>
          <HelpAlert />
          <People />
          <Chevron />
          <MeetNow />
          <Wifi />
          <Battery />
          <Speaker />
          <Label $track={-0.48}>ENG</Label>
          <Clock><Label $track={-0.7}>09:28</Label><Label $track={-0.46}>01-04-2022</Label></Clock>
          <Notification />
          <ShowDesktop />
        </Tray>
      </Taskbar>
    </Screen>
  );
}
